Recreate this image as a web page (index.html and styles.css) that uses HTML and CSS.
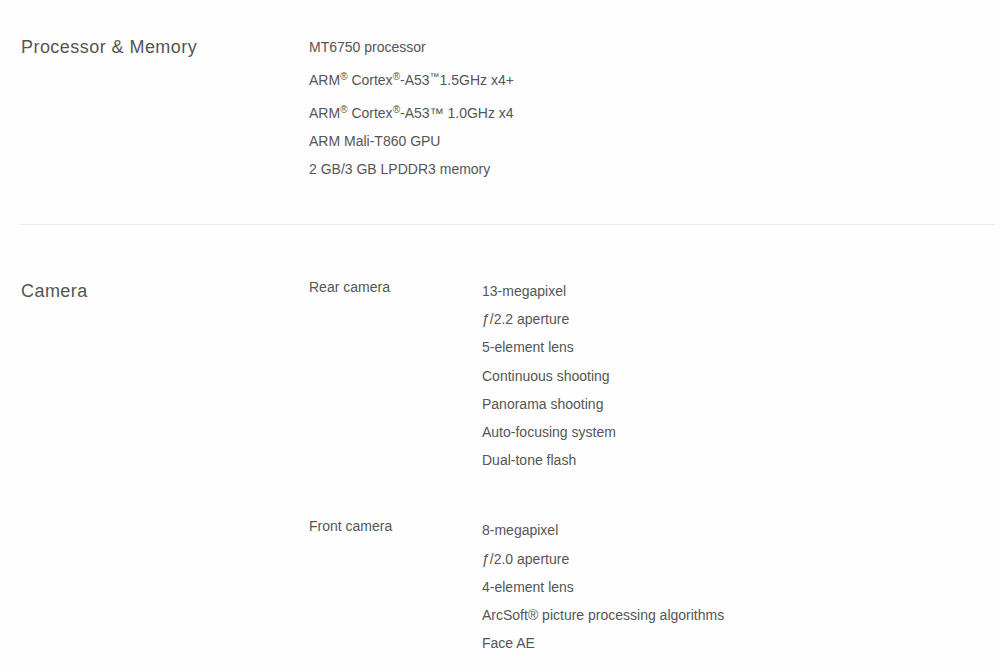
FILE: index.html
```html
<!DOCTYPE html>
<html>
<head>
<meta charset="utf-8">
<link rel="stylesheet" href="styles.css">
</head>
<body>
<div class="page">
  <section class="spec spec-first">
    <h2 class="spec-title">Processor &amp; Memory</h2>
    <ul class="items">
      <li>MT6750 processor</li>
      <li class="has-sup">ARM<sup>®</sup> Cortex<sup>®</sup>-A53<sup>™</sup>1.5GHz x4+</li>
      <li class="has-sup">ARM<sup>®</sup> Cortex<sup>®</sup>-A53™ 1.0GHz x4</li>
      <li>ARM Mali-T860 GPU</li>
      <li>2 GB/3 GB LPDDR3 memory</li>
    </ul>
  </section>
  <section class="spec spec-second">
    <h2 class="spec-title">Camera</h2>
    <div class="groups">
      <div class="group">
        <div class="group-label">Rear camera</div>
        <ul class="items">
          <li>13-megapixel</li>
          <li>ƒ/2.2 aperture</li>
          <li>5-element lens</li>
          <li>Continuous shooting</li>
          <li>Panorama shooting</li>
          <li>Auto-focusing system</li>
          <li>Dual-tone flash</li>
        </ul>
      </div>
      <div class="group">
        <div class="group-label">Front camera</div>
        <ul class="items">
          <li>8-megapixel</li>
          <li>ƒ/2.0 aperture</li>
          <li>4-element lens</li>
          <li>ArcSoft® picture processing algorithms</li>
          <li>Face AE</li>
        </ul>
      </div>
    </div>
  </section>
</div>
</body>
</html>
```

FILE: styles.css
```css
html, body {
  margin: 0;
  padding: 0;
  background: #fefefe;
}
body {
  font-family: "Liberation Sans", Arial, sans-serif;
  color: #555;
  overflow: hidden;
}
.page {
  margin: 0 5px 0 20px;
}
.spec {
  display: grid;
  grid-template-columns: 288px 1fr;
  padding-left: 1px;
}
.spec-first {
  padding-top: 33px;
  padding-bottom: 41px;
  border-bottom: 1px solid #ececec;
}
.spec-second {
  padding-top: 52px;
}
.spec-title {
  margin: 0;
  font-size: 18px;
  font-weight: normal;
  line-height: 28px;
  color: #555;
  letter-spacing: 0.45px;
}
.items {
  list-style: none;
  margin: 0;
  padding: 0;
  font-size: 14px;
  line-height: 28px;
}
.group .items li {
  line-height: 28.2px;
}
.items .has-sup {
  padding-top: 5px;
}
.items sup {
  font-size: 10px;
  line-height: 0;
  vertical-align: 5px;
}
.groups {
  display: flex;
  flex-direction: column;
  gap: 42px;
}
.group {
  display: grid;
  grid-template-columns: 173px 1fr;
}
.group-label {
  font-size: 14px;
  line-height: 20px;
}
```
